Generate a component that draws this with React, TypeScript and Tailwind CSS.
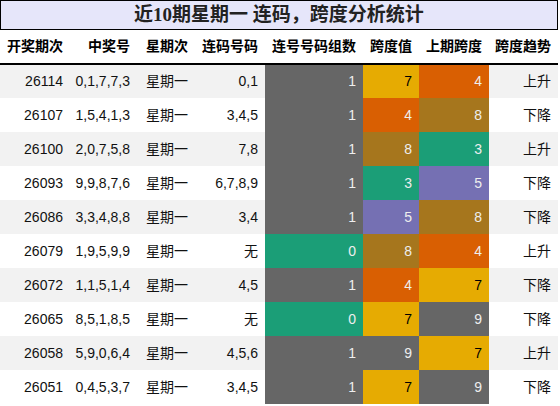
const rows = [
  ['26114', '0,1,7,7,3', '0,1', 1, 7, 4, '上升'],
  ['26107', '1,5,4,1,3', '3,4,5', 1, 4, 8, '下降'],
  ['26100', '2,0,7,5,8', '7,8', 1, 8, 3, '上升'],
  ['26093', '9,9,8,7,6', '6,7,8,9', 1, 3, 5, '下降'],
  ['26086', '3,3,4,8,8', '3,4', 1, 5, 8, '下降'],
  ['26079', '1,9,5,9,9', '无', 0, 8, 4, '上升'],
  ['26072', '1,1,5,1,4', '4,5', 1, 4, 7, '下降'],
  ['26065', '8,5,1,8,5', '无', 0, 7, 9, '下降'],
  ['26058', '5,9,0,6,4', '4,5,6', 1, 9, 7, '上升'],
  ['26051', '0,4,5,3,7', '3,4,5', 1, 7, 9, '下降'],
] as const

// span value -> cell colour
const spanColor: Record<number, string> = {
  3: 'bg-[#1b9e77] text-[#eeeeee]',
  4: 'bg-[#d95f02] text-[#eeeeee]',
  5: 'bg-[#7570b3] text-[#eeeeee]',
  7: 'bg-[#e6ab02] text-black',
  8: 'bg-[#a6761d] text-[#eeeeee]',
  9: 'bg-[#666666] text-[#eeeeee]',
}

const groupColor: Record<number, string> = {
  0: 'bg-[#1b9e77] text-[#eeeeee]',
  1: 'bg-[#666666] text-[#eeeeee]',
}

const headers = ['开奖期次', '中奖号', '星期次', '连码号码', '连号号码组数', '跨度值', '上期跨度', '跨度趋势']
const widths = ['w-[70px]', 'w-[67px]', 'w-[58px]', 'w-[70px]', 'w-[98px]', 'w-[56px]', 'w-[70px]', 'w-[69px]']

export default function App() {
  return (
    <div className="w-[560px] h-[406px] bg-white text-[14px] text-[#111]" style={{ fontFamily: '"Liberation Sans", "Noto Sans CJK SC", sans-serif' }}>
      <div
        className="w-[558px] h-[30px] border border-black bg-[#e6e6fa] flex items-center justify-center text-[19px] font-bold text-[#222]"
        style={{ fontFamily: '"Liberation Serif", "Noto Sans CJK SC", serif' }}
      >
        近10期星期一 连码，跨度分析统计
      </div>
      <table className="w-[558px] border-collapse table-fixed">
        <thead>
          <tr className="h-[34px] border-b-2 border-black">
            {headers.map((h, i) => (
              <th key={h} className={`${widths[i]} text-right pr-[7px] font-bold text-black whitespace-nowrap`}>
                {h}
              </th>
            ))}
          </tr>
        </thead>
        <tbody>
          {rows.map((r, i) => (
            <tr key={r[0]} className={`h-[34px] ${i % 2 === 0 ? 'bg-[#f2f2f2]' : 'bg-white'}`}>
              <td className="text-right pr-[7px]">{r[0]}</td>
              <td className="text-right pr-[7px]">{r[1]}</td>
              <td className="text-right pr-[7px]">星期一</td>
              <td className="text-right pr-[7px]">{r[2]}</td>
              <td className={`text-right pr-[7px] ${groupColor[r[3]]}`}>{r[3]}</td>
              <td className={`text-right pr-[7px] ${spanColor[r[4]]}`}>{r[4]}</td>
              <td className={`text-right pr-[7px] ${spanColor[r[5]]}`}>{r[5]}</td>
              <td className="text-right pr-[7px]">{r[6]}</td>
            </tr>
          ))}
        </tbody>
      </table>
    </div>
  )
}
